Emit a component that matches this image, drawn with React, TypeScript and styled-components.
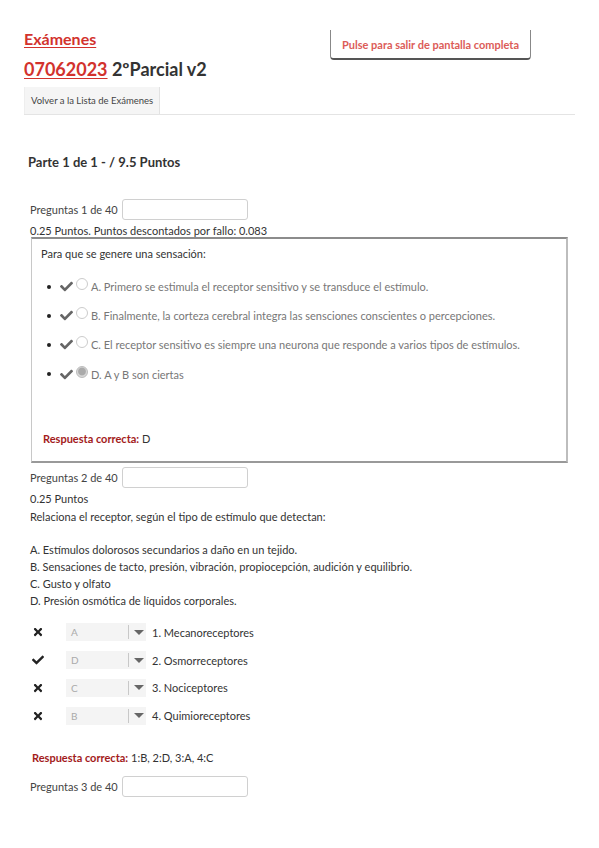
import React from "react";
import styled, { createGlobalStyle } from "styled-components";
import { FaCheck, FaTimes } from "react-icons/fa";

const GlobalStyle = createGlobalStyle`
  html, body {
    margin: 0;
    padding: 0;
    background: #fff;
  }
  body {
    font-family: Lato, "Open Sans", sans-serif;
    color: #333;
  }
`;

const Page = styled.div`
  width: 599px;
  padding: 29px 24px 40px 24px;
  box-sizing: border-box;
`;

const HeaderRow = styled.div`
  display: flex;
  justify-content: space-between;
  align-items: flex-start;
`;

const TitleBlock = styled.div`
  display: flex;
  flex-direction: column;
`;

const RedLink = styled.a<{ size: number }>`
  color: #d2322d;
  font-weight: 700;
  font-size: ${p => p.size}px;
  text-decoration: underline;
  text-underline-offset: 2px;
  text-decoration-thickness: 1px;
`;

const Title = styled.h1`
  margin: 9px 0 0 0;
  font-size: 18px;
  font-weight: 700;
  color: #333;
  line-height: 24px;
`;

const FullscreenButton = styled.div`
  margin: 1px 44px 0 0;
  width: 201px;
  height: 30px;
  box-sizing: border-box;
  border: 1px solid #888;
  border-top: none;
  border-bottom: 2px solid #555;
  border-radius: 0 0 4px 4px;
  display: flex;
  align-items: center;
  justify-content: center;
  color: #dc5c58;
  font-size: 11px;
  font-weight: 700;
`;

const TabBar = styled.div`
  display: flex;
  border-bottom: 1px solid #e4e4e4;
  margin-top: 6px;
`;

const Tab = styled.div`
  background: #f5f5f5;
  border-left: 1px solid #eee;
  border-right: 1px solid #e2e2e2;
  padding: 0 6px;
  height: 27px;
  display: flex;
  align-items: center;
  font-size: 9.5px;
  color: #444;
`;

const PartTitle = styled.h2`
  margin: 39px 0 0 4px;
  font-size: 13px;
  font-weight: 700;
  color: #333;
`;

const Question = styled.div`
  margin-left: 6px;
  font-size: 11px;
  color: #333;
`;

const QuestionHeader = styled.div<{ top: number }>`
  display: flex;
  align-items: center;
  gap: 4px;
  margin-top: ${p => p.top}px;
  font-size: 11px;
  color: #444;
`;

const NumberInput = styled.div`
  width: 124px;
  height: 19px;
  border: 1px solid #d0d0d0;
  border-radius: 3px;
  background: #fff;
`;

const Points = styled.div`
  margin-top: 3px;
  line-height: 15px;
  font-size: 11px;
  color: #333;
`;

const AnswerBox = styled.div`
  margin: -1px 0 0 1px;
  width: 537px;
  height: 226px;
  box-sizing: border-box;
  border: 1px solid #c8c8c8;
  border-top: 2px solid #8c8c8c;
  border-right: 2px solid #bdbdbd;
  border-bottom: 2px solid #999;
  padding: 7px 10px 0 9px;
  display: flex;
  flex-direction: column;
`;

const Prompt = styled.div`
  font-size: 11px;
  color: #333;
  line-height: 15px;
`;

const OptionList = styled.ul`
  margin: 18px 0 0 0;
  padding: 0 0 0 6px;
  list-style: none;
  display: flex;
  flex-direction: column;
  gap: 14.2px;
`;

const Option = styled.li`
  display: flex;
  align-items: center;
  font-size: 11px;
  color: #777;
  height: 15px;
`;

const Bullet = styled.span`
  width: 4px;
  height: 4px;
  border-radius: 50%;
  background: #222;
  margin-right: 9px;
`;

const Check = styled(FaCheck)`
  width: 13px;
  height: 13px;
  color: #666;
  margin-right: 3px;
`;

const Radio = styled.span<{ checked?: boolean }>`
  width: 12px;
  height: 12px;
  border-radius: 50%;
  box-sizing: border-box;
  border: 1px solid ${p => (p.checked ? "#bbb" : "#ccc")};
  background: ${p =>
    p.checked ? "radial-gradient(circle at 50% 45%, #aaa 0 45%, #d8d8d8 60%)" : "#fff"};
  margin-right: 3px;
  margin-top: -5px;
`;

const CorrectLine = styled.div<{ top: number; left?: number }>`
  margin-top: ${p => p.top}px;
  margin-left: ${p => p.left || 0}px;
  font-size: 11px;
  color: #333;
  line-height: 15px;
`;

const CorrectLabel = styled.span`
  color: #a31b1b;
  font-weight: 700;
`;

const Statement = styled.div`
  margin-top: 3px;
  line-height: 16.7px;
  font-size: 11px;
  color: #333;
`;

const MatchList = styled.div`
  margin-top: 14px;
  display: flex;
  flex-direction: column;
  gap: 9.8px;
`;

const MatchRow = styled.div`
  display: flex;
  align-items: center;
  height: 18px;
`;

const ResultIcon = styled.span`
  width: 34px;
  padding-left: 2px;
  display: flex;
  align-items: center;
  color: #222;
  svg {
    width: 12px;
    height: 12px;
  }
`;

const Select = styled.div`
  width: 80px;
  height: 18px;
  background: #f4f4f4;
  display: flex;
  align-items: center;
  font-size: 10px;
  color: #aaa;
  margin-right: 6px;
`;

const SelectValue = styled.span`
  flex: 1;
  padding-left: 5px;
`;

const SelectArrow = styled.span`
  width: 17px;
  height: 14px;
  border-left: 1px solid #c8c8c8;
  display: flex;
  align-items: center;
  justify-content: center;
  &::after {
    content: "";
    border-left: 5px solid transparent;
    border-right: 5px solid transparent;
    border-top: 5px solid #666;
    margin-left: 2px;
  }
`;

const MatchLabel = styled.span`
  font-size: 11px;
  color: #333;
`;

const options = [
  { text: "A. Primero se estimula el receptor sensitivo y se transduce el estímulo." },
  { text: "B. Finalmente, la corteza cerebral integra las sensciones conscientes o percepciones." },
  { text: "C. El receptor sensitivo es siempre una neurona que responde a varios tipos de estímulos." },
  { text: "D. A y B son ciertas", checked: true },
];

const matches = [
  { ok: false, value: "A", label: "1. Mecanoreceptores" },
  { ok: true, value: "D", label: "2. Osmorreceptores" },
  { ok: false, value: "C", label: "3. Nociceptores" },
  { ok: false, value: "B", label: "4. Quimioreceptores" },
];

export default function App() {
  return (
    <>
      <GlobalStyle />
      <Page>
        <HeaderRow>
          <TitleBlock>
            <div>
              <RedLink size={16}>Exámenes</RedLink>
            </div>
            <Title>
              <RedLink size={18}>07062023</RedLink> 2ºParcial v2
            </Title>
          </TitleBlock>
          <FullscreenButton>Pulse para salir de pantalla completa</FullscreenButton>
        </HeaderRow>
        <TabBar>
          <Tab>Volver a la Lista de Exámenes</Tab>
        </TabBar>

        <PartTitle>Parte 1 de 1 - / 9.5 Puntos</PartTitle>

        <Question>
          <QuestionHeader top={29}>
            Preguntas 1 de 40 <NumberInput />
          </QuestionHeader>
          <Points>0.25 Puntos. Puntos descontados por fallo: 0.083</Points>
          <AnswerBox>
            <Prompt>Para que se genere una sensación:</Prompt>
            <OptionList>
              {options.map(o => (
                <Option key={o.text}>
                  <Bullet />
                  <Check />
                  <Radio checked={o.checked} />
                  {o.text}
                </Option>
              ))}
            </OptionList>
            <CorrectLine top={49} left={2}>
              <CorrectLabel>Respuesta correcta:</CorrectLabel> D
            </CorrectLine>
          </AnswerBox>

          <QuestionHeader top={4}>
            Preguntas 2 de 40 <NumberInput />
          </QuestionHeader>
          <Points>0.25 Puntos</Points>
          <Statement>
            Relaciona el receptor, según el tipo de estímulo que detectan:
            <br />
            <br />
            A. Estímulos dolorosos secundarios a daño en un tejido.
            <br />
            B. Sensaciones de tacto, presión, vibración, propiocepción, audición y equilibrio.
            <br />
            C. Gusto y olfato
            <br />
            D. Presión osmótica de líquidos corporales.
          </Statement>
          <MatchList>
            {matches.map(m => (
              <MatchRow key={m.label}>
                <ResultIcon>{m.ok ? <FaCheck /> : <FaTimes />}</ResultIcon>
                <Select>
                  <SelectValue>{m.value}</SelectValue>
                  <SelectArrow />
                </Select>
                <MatchLabel>{m.label}</MatchLabel>
              </MatchRow>
            ))}
          </MatchList>
          <CorrectLine top={25} left={2}>
            <CorrectLabel>Respuesta correcta:</CorrectLabel> 1:B, 2:D, 3:A, 4:C
          </CorrectLine>
          <QuestionHeader top={11}>
            Preguntas 3 de 40 <NumberInput />
          </QuestionHeader>
        </Question>
      </Page>
    </>
  );
}
